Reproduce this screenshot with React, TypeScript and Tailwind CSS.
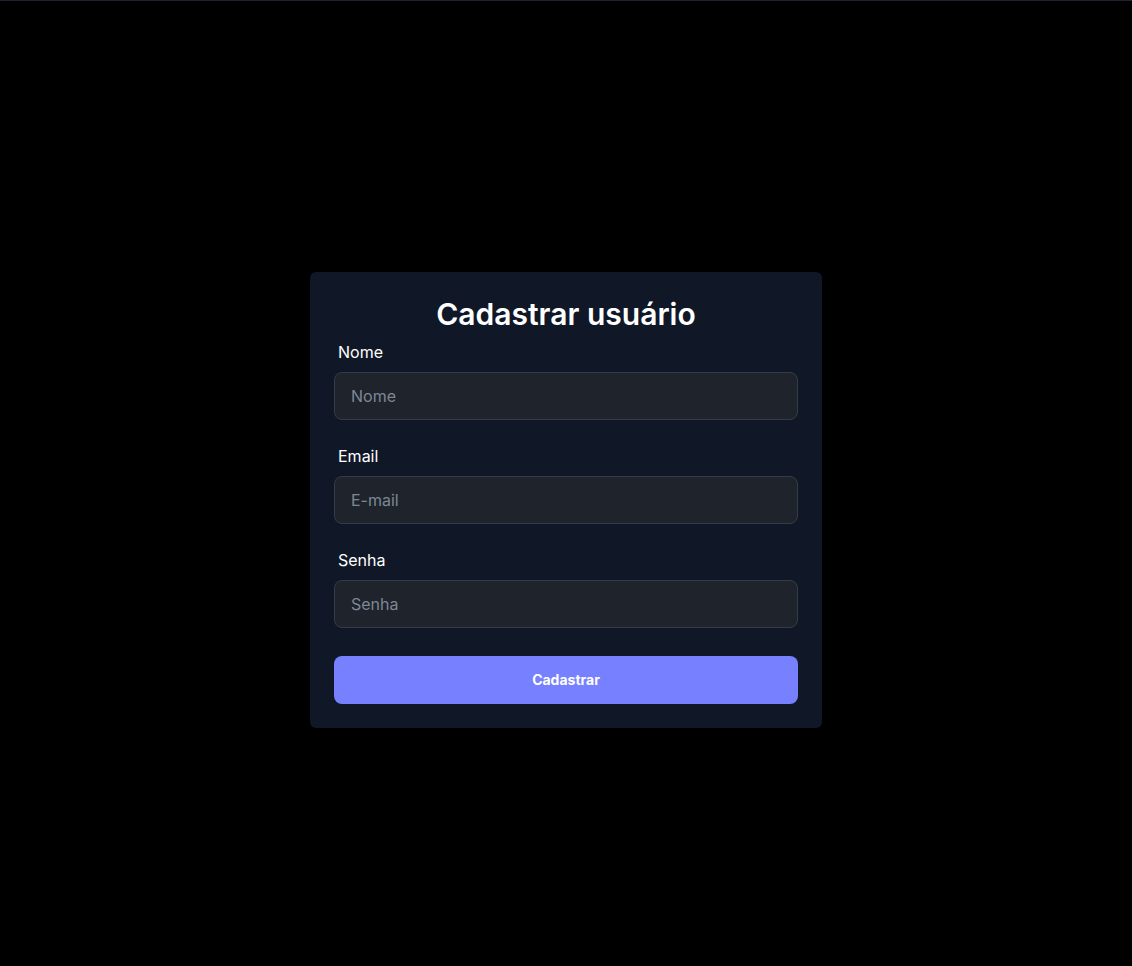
import React from "react";

export default function App() {
  const fields = [
    { label: "Nome", placeholder: "Nome", type: "text" },
    { label: "Email", placeholder: "E-mail", type: "email" },
    { label: "Senha", placeholder: "Senha", type: "password" },
  ];
  return (
    <div
      className="min-h-[966px] w-full bg-black border-t border-[#1e2530] flex flex-col items-center justify-center pt-[33px]"
      style={{ fontFamily: "Inter, 'Noto Sans', sans-serif" }}
    >
      <div className="w-[512px] bg-[#101828] rounded-md px-6 pt-6 pb-6 flex flex-col">
        <h1 className="text-[30px] leading-9 font-semibold text-white text-center">Cadastrar usuário</h1>
        <div className="mt-2 flex flex-col gap-6">
          {fields.map((f) => (
            <div key={f.label} className="flex flex-col">
              <label className="text-base leading-6 text-white pl-1">{f.label}</label>
              <input
                type={f.type}
                placeholder={f.placeholder}
                className="mt-2 h-12 w-full rounded-lg bg-[#1f242c] border border-[#363c46] px-4 text-base text-white placeholder:text-[#7d8796] outline-none"
              />
            </div>
          ))}
        </div>
        <button className="mt-7 h-12 w-full rounded-lg bg-[#7780ff] text-white text-sm font-bold">Cadastrar</button>
      </div>
    </div>
  );
}
